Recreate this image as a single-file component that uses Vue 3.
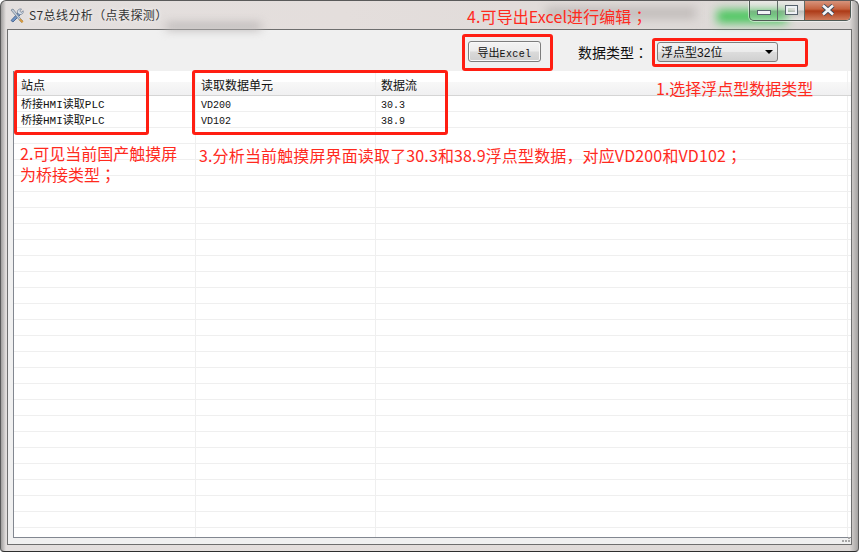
<template>
  <div class="window">
    <div class="glass glass-a"></div>
    <div class="glass glass-b"></div>
    <div class="glass glass-c"></div>

    <div class="titlebar">
      <svg class="app-icon" width="18" height="18" viewBox="0 0 18 18">
        <path d="M3 14.5 L10.5 6.5 L12.5 8.5 L5 16 Z" fill="#6f93c2" stroke="#3b5c8c" stroke-width="0.8" />
        <path d="M9.5 7 C8.8 4.5 10.8 2.5 13.5 3 L11.8 5 L13 6.5 L15.2 4.8 C15.8 7.4 13.4 9.2 11 8.2 Z" fill="#dbe3ec" stroke="#64748a" stroke-width="0.7" />
        <path d="M3 4 L5 3 L12 12 L15 15 L13.5 16.5 L10.5 13 Z" fill="#c3cedb" stroke="#6a7888" stroke-width="0.7" />
        <path d="M12.5 12.5 L15.5 15.5 L14 17 L11 14 Z" fill="#d89a3c" />
      </svg>
      <span class="title">S7总线分析<span class="tc">（点表探测）</span></span>
      <div class="caption-btns">
        <div class="cap cap-min"><i></i></div>
        <div class="cap cap-max"><i></i></div>
        <div class="cap cap-close">
          <svg width="16" height="12" viewBox="0 0 16 12">
            <path d="M3 1.5 L13 10.5 M13 1.5 L3 10.5" stroke="#3d4a5c" stroke-width="4.4" />
            <path d="M3 1.5 L13 10.5 M13 1.5 L3 10.5" stroke="#f3f5f8" stroke-width="2.6" />
          </svg>
        </div>
      </div>
    </div>

    <div class="panel">
      <div class="toolbar">
        <button class="export-btn">导出<span class="lat">Excel</span></button>
        <span class="type-label">数据类型<span class="tc">：</span></span>
        <div class="type-select">
          <span>浮点型<span class="num">32</span>位</span>
          <span class="arrow"></span>
        </div>
      </div>

      <div class="grid">
        <div class="grid-head">
          <div class="cell col-a">站点</div>
          <div class="cell col-b">读取数据单元</div>
          <div class="cell col-c">数据流</div>
          <div class="cell col-d"></div>
        </div>
        <div v-for="(row, i) in rows" :key="i" class="grid-row">
          <div class="cell col-a">
            <template v-if="row.unit">桥接<span class="lat wide">HMI</span>读取<span class="lat wide">PLC</span></template>
          </div>
          <div class="cell col-b"><span v-if="row.unit" class="lat">{{ row.unit }}</span></div>
          <div class="cell col-c"><span v-if="row.unit" class="lat">{{ row.value }}</span></div>
          <div class="cell col-d"></div>
        </div>
      </div>

      <div class="statusbar">
        <svg class="grip" width="10" height="7" viewBox="0 0 10 7">
          <g fill="#a6a6a6">
            <rect x="7" y="0" width="2" height="2" />
            <rect x="4" y="3" width="2" height="2" />
            <rect x="7" y="3" width="2" height="2" />
            <rect x="1" y="3" width="2" height="2" />
          </g>
        </svg>
      </div>
    </div>

    <div class="mark mark-station"></div>
    <div class="mark mark-data"></div>
    <div class="mark mark-export"></div>
    <div class="mark mark-select"></div>

    <div class="note note-1">1.选择浮点型数据类型</div>
    <div class="note note-2">
      <div class="note-line">2.可见当前国产触摸屏</div>
      <div class="note-line">为桥接类型<span class="tc">；</span></div>
    </div>
    <div class="note note-3">3.分析当前触摸屏界面读取了30.3和38.9浮点型数据，对应VD200和VD102<span class="tc">；</span></div>
    <div class="note note-4">4.可导出Excel进行编辑<span class="tc">；</span></div>
  </div>
</template>

<script setup>
const rows = Array.from({ length: 28 }, () => ({ unit: '', value: '' }))
rows[0] = { unit: 'VD200', value: '30.3' }
rows[1] = { unit: 'VD102', value: '38.9' }
</script>

<style scoped>
.window {
  position: relative;
  width: 859px;
  height: 552px;
  box-sizing: border-box;
  display: flex;
  flex-direction: column;
  overflow: hidden;
  border: 1px solid #5a5a5a;
  border-bottom-color: #2e2e2e;
  border-radius: 6px 6px 4px 4px;
  background: linear-gradient(90deg, #a09e9d 0, #e3dfde 5px, #e4dedc 40%, #dcd8d6 99%, #a5a3a2 100%);
  font-family: "Noto Sans CJK SC", sans-serif;
}

.tc {
  font-family: "Noto Sans CJK TC", sans-serif;
}

.glass {
  position: absolute;
  filter: blur(5px);
}

.glass-a {
  left: 165px;
  top: 22px;
  width: 95px;
  height: 7px;
  background: #b9b5b5;
}

.glass-b {
  left: 545px;
  top: 6px;
  width: 150px;
  height: 12px;
  background: #c2bdbb;
}

.glass-c {
  left: 716px;
  top: 9px;
  width: 70px;
  height: 13px;
  background: #48c65c;
}

.titlebar {
  position: relative;
  height: 28px;
  flex: none;
  display: flex;
  align-items: center;
  padding-left: 7px;
}

.app-icon {
  margin-top: -1px;
}

.title {
  margin-left: 3px;
  margin-top: -1px;
  font-size: 12px;
  letter-spacing: 0.4px;
  color: #333;
  text-shadow: 0 0 4px #fff;
}

.caption-btns {
  position: absolute;
  top: -1px;
  right: 7px;
  display: flex;
  height: 21px;
  box-sizing: border-box;
  border: 1px solid #4f5a55;
  border-top: none;
  border-radius: 0 0 5px 5px;
  overflow: hidden;
  box-shadow: 0 0 0 1px rgba(255, 255, 255, 0.5);
}

.cap {
  display: flex;
  align-items: center;
  justify-content: center;
  box-sizing: border-box;
  background: linear-gradient(180deg, rgba(255, 255, 255, 0.45), rgba(255, 255, 255, 0.1) 50%, rgba(90, 110, 100, 0.25) 55%, rgba(255, 255, 255, 0.3));
}

.cap-min {
  width: 28px;
  border-right: 1px solid #5f6b66;
}

.cap-min i {
  width: 12px;
  height: 3px;
  margin-top: 5px;
  background: #f1f3f5;
  border: 1px solid #56616c;
}

.cap-max {
  width: 27px;
  border-right: 1px solid #5f6b66;
}

.cap-max i {
  width: 7px;
  height: 4px;
  border: 2px solid #eef1f4;
  outline: 1px solid #56616c;
}

.cap-close {
  width: 45px;
  background: linear-gradient(180deg, #d99a84, #c5623f 45%, #ad3a17 55%, #cf7c5c);
}

.panel {
  flex: 1;
  display: flex;
  flex-direction: column;
  min-height: 0;
  margin: 0 6px 6px;
  border: 1px solid #6e6e6e;
  background: #f0f0f0;
}

.toolbar {
  height: 41px;
  flex: none;
  display: flex;
  align-items: center;
}

.export-btn {
  margin-left: 460px;
  width: 73px;
  height: 21px;
  padding: 0;
  margin-top: 2px;
  border: 1px solid #7d7d7d;
  border-radius: 3px;
  background: linear-gradient(180deg, #f3f3f3, #ececec 48%, #dadada 52%, #cfcfcf);
  box-shadow: inset 0 0 0 1px #f8f8f8;
  font-family: "Noto Sans CJK SC", sans-serif;
  font-size: 11px;
  color: #111;
}

.export-btn .lat {
  letter-spacing: 0.4px;
}

.lat {
  font-family: "Liberation Mono", monospace;
  font-size: 10px;
}

.lat.wide {
  font-size: 11px;
}

.type-label {
  margin-left: 37px;
  margin-top: 2px;
  font-size: 14px;
  color: #111;
  white-space: nowrap;
}

.type-select {
  margin-left: 9px;
  width: 121px;
  height: 20px;
  margin-top: 2px;
  box-sizing: border-box;
  display: flex;
  align-items: center;
  justify-content: space-between;
  padding: 0 4px 0 3px;
  border: 1px solid #7d7d7d;
  border-radius: 3px;
  background: linear-gradient(180deg, #f2f2f2, #ebebeb 48%, #dcdcdc 52%, #d0d0d0);
  font-size: 12px;
  color: #111;
}

.num {
  font-family: "Liberation Sans", sans-serif;
}

.arrow {
  width: 0;
  height: 0;
  border-left: 4px solid transparent;
  border-right: 4px solid transparent;
  border-top: 4px solid #000;
}

.grid {
  flex: 1;
  min-height: 0;
  margin-left: 5px;
  overflow: hidden;
  background: #fff;
  border-left: 1px solid #828790;
  border-bottom: 1px solid #828790;
}

.grid-head {
  height: 25px;
  display: flex;
  box-sizing: border-box;
  border-bottom: 1px solid #d5d5d5;
  background: linear-gradient(180deg, #fff 0, #fff 44%, #f8f8f8 46%, #f0f0f1 100%);
  font-size: 12px;
  color: #111;
}

.grid-head .cell {
  padding-top: 5px;
  line-height: 17px;
  border-right: 1px solid #f1f1f1;
}

.grid-row {
  height: 16px;
  display: flex;
  box-sizing: border-box;
  border-bottom: 1px solid #efefef;
  font-size: 11px;
  line-height: 15px;
  color: #111;
}

.cell {
  box-sizing: border-box;
  padding-left: 7px;
  white-space: nowrap;
  overflow: hidden;
  border-right: 1px solid #efefef;
}

.col-a {
  width: 182px;
  flex: none;
}

.col-b {
  width: 180px;
  flex: none;
  padding-left: 5px;
}

.col-c {
  width: 472px;
  flex: none;
  padding-left: 5px;
}

.col-d {
  flex: 1;
  border-right: none;
}

.statusbar {
  position: relative;
  height: 6px;
  flex: none;
  display: flex;
  justify-content: flex-end;
}

.grip {
  margin-top: -1px;
}

.mark {
  position: absolute;
  box-sizing: border-box;
  border: 3px solid #ff1e12;
  border-radius: 3px;
}

.mark-station {
  left: 13px;
  top: 69px;
  width: 135px;
  height: 65px;
}

.mark-data {
  left: 191px;
  top: 69px;
  width: 256px;
  height: 65px;
}

.mark-export {
  left: 461px;
  top: 33px;
  width: 91px;
  height: 37px;
}

.mark-select {
  left: 651px;
  top: 37px;
  width: 156px;
  height: 29px;
}

.note {
  position: absolute;
  font-size: 16px;
  line-height: 21px;
  color: #ff2a1e;
  white-space: nowrap;
}

.note-line {
  height: 21px;
}

.note-1 {
  left: 655px;
  top: 77px;
}

.note-2 {
  left: 19px;
  top: 142px;
}

.note-3 {
  left: 198px;
  top: 144px;
  letter-spacing: 0.14px;
}

.note-4 {
  left: 466px;
  top: 5px;
  letter-spacing: 0.1px;
}
</style>
